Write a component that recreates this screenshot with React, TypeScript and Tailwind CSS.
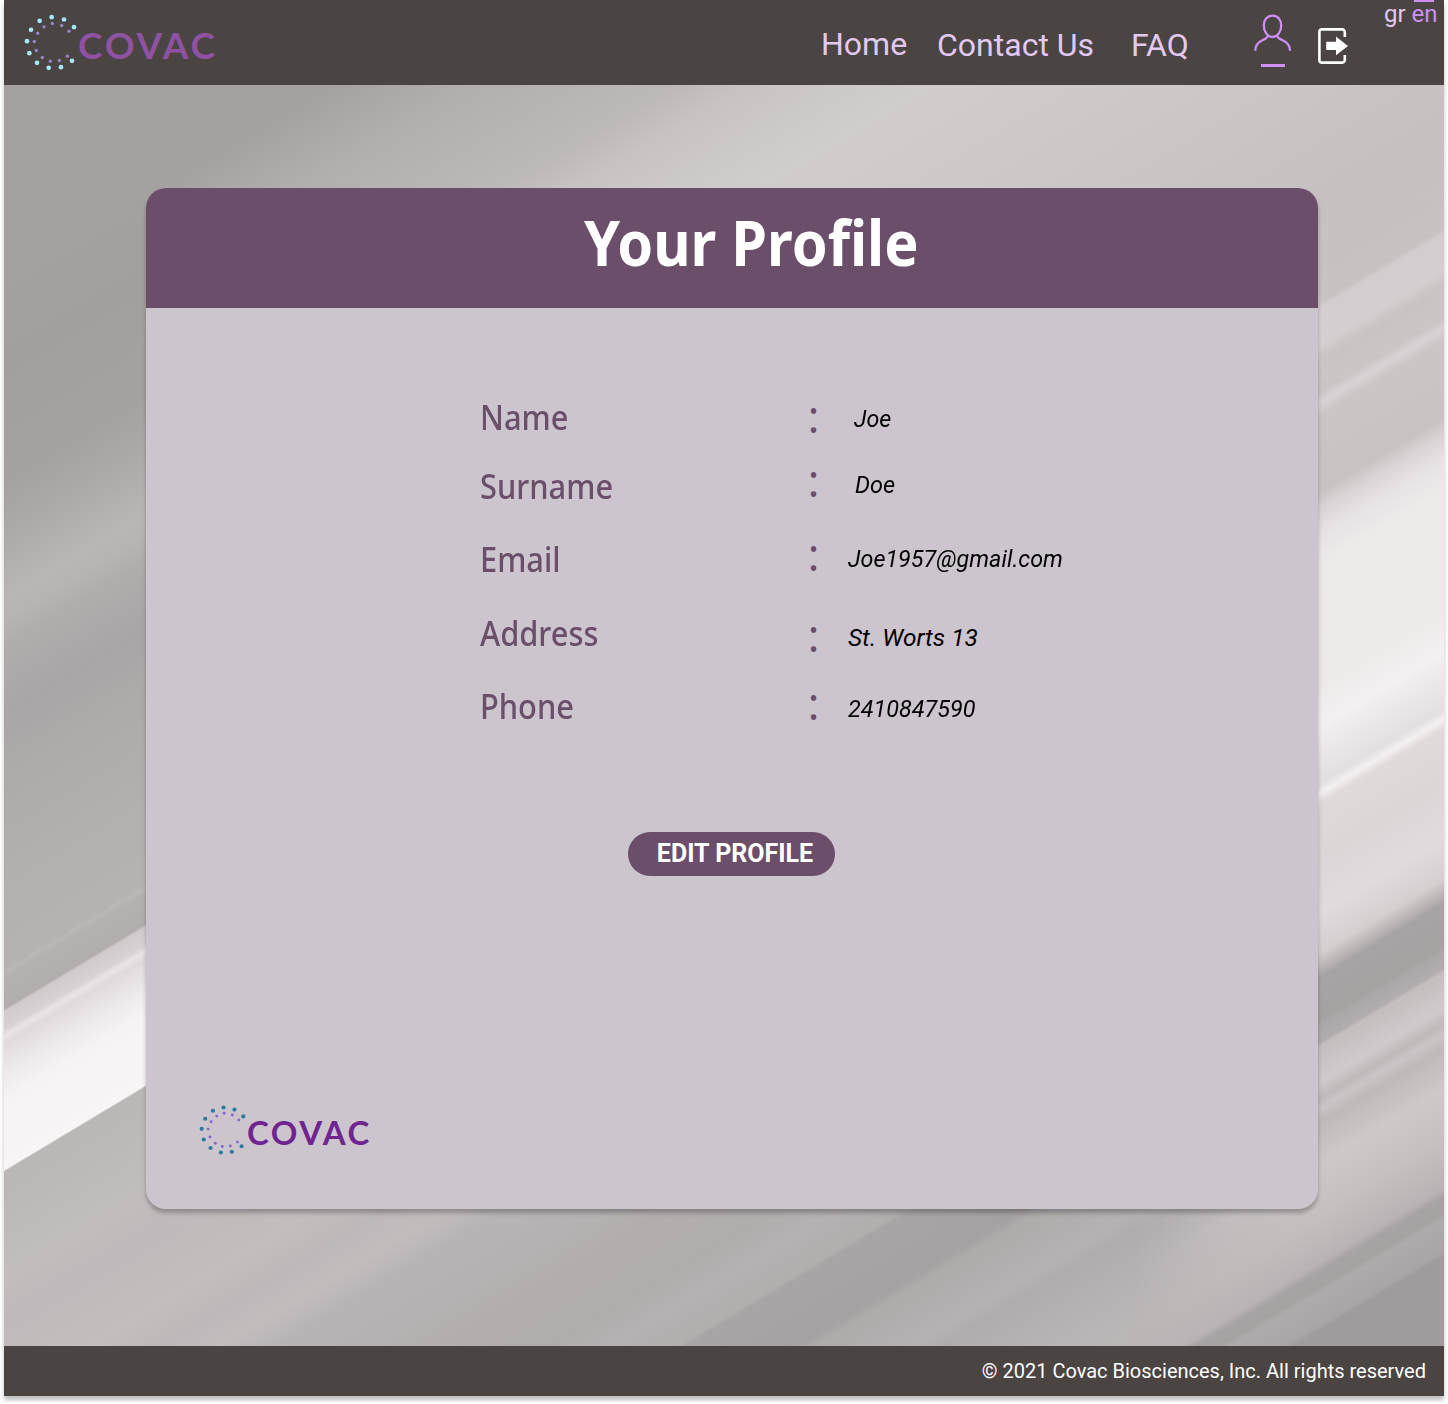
import React from "react";

const outerDots = [[155, 52], [192, 59], [222, 82], [119, 63], [93, 90], [81, 124], [88, 160], [111, 189], [146, 204], [183, 202], [216, 183]];
const innerDots = [[157, 71], [185, 77], [207, 94], [132, 81], [113, 100], [103, 125], [109, 152], [127, 173], [151, 184], [178, 182], [202, 169]];

function Dots({ className, outer, inner }: { className: string; outer: string; inner: string }) {
  return (
    <svg viewBox="69 40 165 176" className={className} aria-hidden="true">
      {outerDots.map(([x, y]) => <circle key={`${x}-${y}`} cx={x} cy={y} r={7} fill={outer} />)}
      {innerDots.map(([x, y]) => <circle key={`${x}-${y}`} cx={x} cy={y} r={5} fill={inner} />)}
    </svg>
  );
}

type Stop = [number, string];

// Stops are measured along the normal of the streaks, from 0 to 2210.
const base: Stop[] = [
  [85, "#a5a1a1"], [280, "#a5a1a1"], [363, "#a49f9f"], [485, "#a6a2a2"], [534, "#aca9a9"], [598, "#bab6b6"], [619, "#b8b4b4"], [647, "#b1adad"],
  [712, "#aaa5a6"], [768, "#adaaaa"], [890, "#b3b0b0"], [968, "#b5b2b1"], [972, "#bbb7b7"], [978, "#b4b1b0"], [1009, "#b2aeae"], [1012, "#d0cacc"],
  [1030, "#d8d2d4"], [1036, "#e9e4e6"], [1044, "#e0dadd"], [1076, "#efebed"], [1100, "#f5f3f4"], [1170, "#f7f5f6"], [1172, "#bbb7b7"],
  [1214, "#bdb9b9"], [1271, "#c2bdbd"], [1320, "#c0b9bb"], [1399, "#c4bdbd"], [1440, "#bdb8b9"], [1475, "#c2bcbd"], [1510, "#b8b4b5"], [1560, "#b6b2b3"],
  [1609, "#b3aead"], [1676, "#b1adad"], [1710, "#b6b1b2"], [1750, "#b1aeae"], [1755, "#a9a5a6"], [1822, "#a6a1a2"], [1832, "#aeabab"],
  [1890, "#b6b2b3"], [1910, "#b1adae"], [1953, "#b6b2b4"], [2008, "#bcb7b7"], [2054, "#b9b4b5"], [2061, "#a8a4a5"], [2075, "#a6a2a2"],
  [2080, "#aeabac"], [2113, "#adaaaa"], [2116, "#a09c9d"], [2210, "#a09c9d"],
];
const right: Stop[] = [
  [868, "#c8c3c3"], [1046, "#c6c0c0"], [1092, "#c8c2c2"], [1098, "#d3cdcf"], [1134, "#d4ced0"], [1150, "#c9c3c3"], [1182, "#cbc5c6"], [1192, "#d8d3d5"],
  [1205, "#cbc5c5"], [1281, "#c8c2c2"], [1297, "#d8d2d4"], [1322, "#e7e2e4"], [1354, "#eeeaea"], [1475, "#efeaea"], [1516, "#f4f1f2"],
  [1540, "#ede8e9"], [1573, "#e4dfe0"], [1583, "#f4f0f1"], [1593, "#e0dada"], [1646, "#dcd6d7"], [1702, "#e1dbde"], [1743, "#d5cfd0"],
  [1757, "#bcb6b7"], [1767, "#a8a4a5"], [1810, "#a6a2a2"], [1815, "#aca8a9"], [1832, "#b1adae"], [1836, "#c4bebf"], [1872, "#d0cacc"], [1888, "#bfb9ba"],
  [1898, "#cbc5c7"], [1912, "#bfb9b9"], [1953, "#cec8c8"], [2002, "#c6c0c0"], [2052, "#b9b3b5"], [2060, "#a8a4a5"], [2076, "#a6a2a2"], [2083, "#aeabac"],
  [2115, "#a9a5a6"], [2120, "#a09c9d"], [2210, "#a09c9d"],
];
const top: Stop[] = [
  [85, "#a5a1a1"], [280, "#a5a1a1"], [368, "#b3afae"], [488, "#beb9b9"], [530, "#c8c2c2"], [578, "#cdc8c8"], [638, "#d2cdcd"], [788, "#cdc7c7"], [994, "#c6c0c0"], [1060, "#c7c1c1"],
];

function StreakGradient({ id, stops }: { id: string; stops: Stop[] }) {
  return (
    <linearGradient id={id} gradientUnits="userSpaceOnUse" x1="4" y1="0" x2="979" y2="1625">
      {stops.map(([t, c]) => <stop key={t} offset={t / 2210} stopColor={c} />)}
    </linearGradient>
  );
}

function Backdrop() {
  return (
    <svg viewBox="4 85 1440 1261" className="absolute inset-0 h-full w-full" preserveAspectRatio="none" aria-hidden="true">
      <defs>
        <StreakGradient id="base" stops={base} />
        <StreakGradient id="right" stops={right} />
        <StreakGradient id="top" stops={top} />
        <linearGradient id="fade" gradientUnits="userSpaceOnUse" x1="1130" y1="0" x2="1330" y2="0">
          <stop offset="0" stopColor="#000" />
          <stop offset="1" stopColor="#fff" />
        </linearGradient>
        <mask id="rightMask" maskUnits="userSpaceOnUse" x="1130" y="85" width="314" height="1261">
          <rect x="1130" y="85" width="314" height="1261" fill="url(#fade)" />
        </mask>
      </defs>
      <rect x="4" y="85" width="1440" height="1261" fill="url(#base)" />
      <rect x="1130" y="85" width="314" height="1261" fill="url(#right)" mask="url(#rightMask)" />
      <rect x="4" y="85" width="1440" height="115" fill="url(#top)" />
    </svg>
  );
}

function Header() {
  return (
    <header className="flex h-[85px] items-start bg-[#4a4443] font-[Roboto,sans-serif]">
      <div className="flex w-[817px] pl-[19px] pt-[13px]">
        <Dots className="h-[59px] w-[55px] shrink-0" outer="#a5e9f8" inner="#9c85c9" />
        <span className="mt-[8px] font-[Lato,sans-serif] text-[37px] font-bold leading-[48px] tracking-[2.75px] text-[#8f52a2]">COVAC</span>
      </div>
      <nav className="flex w-[433px] text-[32px] leading-[38px] text-[#e3c9f1]">
        <a className="w-[116px] pt-[25px]">Home</a>
        <a className="w-[194px] whitespace-nowrap pt-[26px]">Contact Us</a>
        <a className="pt-[26px]">FAQ</a>
      </nav>
      <div className="flex w-[64px] flex-col pt-[14px]">
        <svg viewBox="1254 14 38 38" className="h-[38px] w-[38px]" fill="none" stroke="#cf90f6" strokeWidth="2.3">
          <path d="M1272.5 15.7c5 0 8.700 3.800 8.700 9.800 0 6.300-3.800 11.500-8.700 11.500s-8.700-5.200-8.700-11.500c0-6 3.700-9.800 8.700-9.800z" />
          <path d="M1267.800 36c-.8 2.600-3 3-5.500 4.200-4.500 2-7 5.200-7 10.600M1277.200 36c.8 2.600 3 3 5.500 4.200 4.500 2 7.300 5.200 7.300 10.600" />
        </svg>
        <span className="ml-[7px] mt-[12px] h-[3px] w-[24px] bg-[#cf90f6]" />
      </div>
      <svg viewBox="1318 28 30 36" className="mt-[28px] h-[36px] w-[30px]" fill="none" stroke="#fff" strokeWidth="2.600">
        <path d="M1344.800 37v-5a2.600 2.600 0 0 0-2.600-2.600h-20.200a2.600 2.600 0 0 0-2.600 2.600v28a2.600 2.600 0 0 0 2.600 2.600h20.200a2.600 2.600 0 0 0 2.600-2.600v-5" />
        <path d="M1327 41.800h9v-5.200l12 9.400-12 9.300v-5.200h-9a.8.8 0 0 1-.8-.8v-6.700a.8.8 0 0 1 .8-.8z" fill="#fff" stroke="none" />
      </svg>
      <div className="ml-[36px] flex flex-col">
        <span className="ml-[30px] h-[2px] w-[20px] bg-[#cf90f6]" />
        <div className="-mt-[2px] flex gap-[6px] text-[24px] leading-[28px]">
          <span className="text-[#e3c9f1]">gr</span>
          <span className="text-[#cf90f6]">en</span>
        </div>
      </div>
    </header>
  );
}

const labels = [
  { text: "Name", className: "h-[69px]" },
  { text: "Surname", className: "h-[73px]" },
  { text: "Email", className: "h-[74px]" },
  { text: "Address", className: "h-[73px]" },
  { text: "Phone", className: "h-[48px]" },
];
const colons = ["h-[64px]", "h-[74px]", "h-[81px]", "h-[68px]", "h-[48px]"];
const values = [
  { text: "Joe", className: "h-[66px] scale-x-[0.95] ml-[6px]" },
  { text: "Doe", className: "h-[74px] scale-x-[0.96] ml-[7px]" },
  { text: "Joe1957@gmail.com", className: "h-[79px] scale-x-[0.952]" },
  { text: "St. Worts 13", className: "h-[71px]" },
  { text: "2410847590", className: "h-[48px] scale-x-[0.955]" },
];

function ProfileCard() {
  return (
    <section className="relative ml-[142px] flex h-[1021px] w-[1172px] flex-col overflow-hidden rounded-[20px] bg-[#ccc5cd] font-['Noto_Sans',sans-serif] shadow-[0_4px_4px_rgba(0,0,0,0.25)]">
      <div className="h-[120px] bg-[#6a4e6a] pl-[438px] pt-[10px]">
        <h1 className="origin-left scale-x-[0.914] whitespace-nowrap text-[63px] font-bold leading-[88px] text-white">Your Profile</h1>
      </div>
      <div className="flex h-[524px] pl-[334px]">
        <div className="w-[327.500px] origin-left scale-x-[0.88] pt-[85px] text-[35px] font-medium leading-[48px] text-[#6a4e6a]">
          {labels.map((l) => <div key={l.text} className={l.className}>{l.text}</div>)}
        </div>
        <div className="w-[40.500px] pt-[83px] font-['Open_Sans',sans-serif] text-[46px] leading-[48px] text-[#6a4e6a]">
          {colons.map((c, i) => <div key={i} className={c}>:</div>)}
        </div>
        <div className="whitespace-nowrap pt-[87px] font-[Roboto,sans-serif] text-[24.500px] italic leading-[48px] text-black">
          {values.map((v) => <div key={v.text} className={`origin-left ${v.className}`}>{v.text}</div>)}
        </div>
      </div>
      <button className="ml-[482px] h-[44px] w-[207px] rounded-full bg-[#6a4e6a] pl-[7px] font-[Roboto,sans-serif] text-[25px] font-bold leading-[44px] text-white">EDIT PROFILE</button>
      <div className="mt-[228px] flex pl-[52px]">
        <Dots className="h-[52px] w-[49px] shrink-0" outer="#2b7a9c" inner="#8566cb" />
        <span className="mt-[6px] font-[Lato,sans-serif] text-[33px] font-bold leading-[44px] tracking-[2.5px] text-[#70248f]">COVAC</span>
      </div>
    </section>
  );
}

export default function App() {
  return (
    <div className="h-[1404px] overflow-hidden bg-white">
      <div className="mx-auto flex h-[1396px] w-[1440px] flex-col shadow-[0_4px_4px_rgba(0,0,0,0.25)]">
        <Header />
        <main className="relative h-[1261px] pt-[103px]">
          <Backdrop />
          <ProfileCard />
        </main>
        <footer className="flex h-[50px] items-center justify-end bg-[#4a4443] pr-[18px] font-[Roboto,sans-serif] text-[20px] text-white">
          © 2021 Covac Biosciences, Inc. All rights reserved
        </footer>
      </div>
    </div>
  );
}
